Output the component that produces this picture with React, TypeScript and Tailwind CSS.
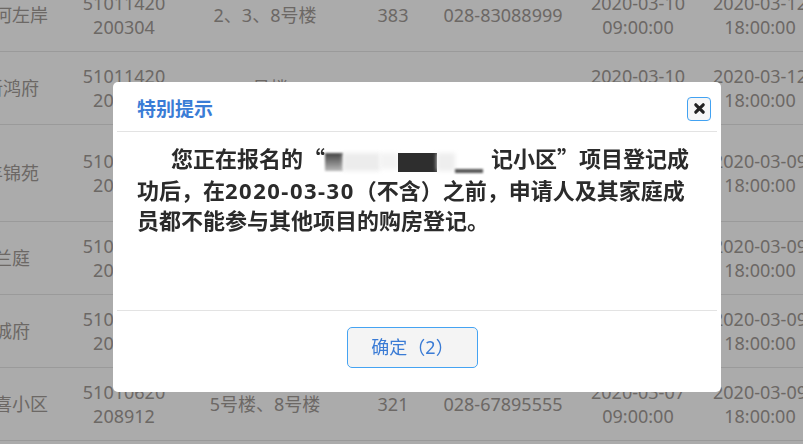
import React from 'react'

type Row = {
  name: string
  code: string[]
  bld: string[]
  num: string
  tel: string
  start: string[]
  end: string[]
  tall?: boolean
}

const rows: Row[] = [
  { name: '蓝光河左岸', code: ['51011420', '200304'], bld: ['2、3、8号楼'], num: '383', tel: '028-83088999', start: ['2020-03-10', '09:00:00'], end: ['2020-03-12', '18:00:00'] },
  { name: '锦新鸿府', code: ['51011420', '200298'], bld: ['7号楼'], num: '216', tel: '028-85126666', start: ['2020-03-10', '09:00:00'], end: ['2020-03-12', '18:00:00'] },
  { name: '华丰锦苑', code: ['51010720', '200276'], bld: ['1、2、3、4号楼', '5、6、7号楼', '9号楼'], num: '504', tel: '028-61538888', start: ['2020-03-07', '09:00:00'], end: ['2020-03-09', '18:00:00'], tall: true },
  { name: '御兰庭', code: ['51010420', '200311'], bld: ['3号楼'], num: '156', tel: '028-87654321', start: ['2020-03-07', '09:00:00'], end: ['2020-03-09', '18:00:00'] },
  { name: '铭城府', code: ['51012220', '200287'], bld: ['1、2号楼'], num: '242', tel: '028-65432100', start: ['2020-03-07', '09:00:00'], end: ['2020-03-09', '18:00:00'] },
  { name: '新双喜小区', code: ['51010620', '208912'], bld: ['5号楼、8号楼'], num: '321', tel: '028-67895555', start: ['2020-03-07', '09:00:00'], end: ['2020-03-09', '18:00:00'] },
  { name: '锦城华府', code: ['51010820', '200265'], bld: ['2号楼'], num: '188', tel: '028-84561234', start: ['2020-03-06', '09:00:00'], end: ['2020-03-08', '18:00:00'] },
]

function Cell({ lines }: { lines: string[] }) {
  return (
    <div className="flex flex-col items-center justify-center text-center whitespace-nowrap">
      {lines.map((l, i) => (
        <span key={i}>{l}</span>
      ))}
    </div>
  )
}

function CloseIcon() {
  return (
    <svg width="13" height="13" viewBox="0 0 14 14">
      <path d="M3 3 L11 11 M11 3 L3 11" stroke="#222" strokeWidth="3.4" strokeLinecap="round" />
    </svg>
  )
}

// full-width quotes need the CJK face
const cjk = { fontFamily: '"Noto Sans CJK SC", sans-serif' }

export default function App() {
  return (
    <div
      className="relative w-[803px] h-[444px] overflow-hidden bg-white"
      style={{ fontFamily: '"Noto Sans", "Noto Sans CJK SC", sans-serif' }}
    >
      {/* project list (behind the dialog) */}
      <div className="-ml-[67px] -mt-[21px] text-[18px] leading-[24px] text-[#a29c97]">
        {rows.map((r, i) => (
          <div
            key={i}
            className={`grid grid-cols-[140px_102px_180px_76px_144px_126px_118px] border-b border-[#e6e6e6] ${
              r.tall ? 'h-[97px]' : 'h-[73px]'
            }`}
          >
            <Cell lines={[r.name]} />
            <Cell lines={r.code} />
            <Cell lines={r.bld} />
            <Cell lines={[r.num]} />
            <Cell lines={[r.tel]} />
            <Cell lines={r.start} />
            <Cell lines={r.end} />
          </div>
        ))}
      </div>

      {/* mask + dialog */}
      <div className="fixed inset-0 bg-black/[0.33]">
        <div className="ml-[113px] mt-[82px] w-[608px] h-[310px] bg-white rounded-[5px] flex flex-col">
          {/* Header */}
          <div className="mx-1 h-[50px] pt-[6px] pl-5 pr-[6px] flex items-center justify-between border-b border-[#e3e3e3]">
            <h3 className="text-[19px] font-bold text-[#3a7cd6]">特别提示</h3>
            <button className="w-6 h-6 -mt-[2px] flex items-center justify-center rounded-[4px] border border-[#42a2f2] bg-[#f6f6f6]">
              <CloseIcon />
            </button>
          </div>

          {/* Body */}
          <div className="flex-1 pl-6 pr-[30px] pt-[10px]">
            <p className="indent-[34px] text-[22px] leading-[30px] font-bold text-[#2b2b2b]">
              您正在报名的<span style={cjk}>“</span>
              <span className="inline-flex items-start w-[166px] h-[22px] align-[-4px]">
                <span className="w-[18px] h-[18px] bg-gradient-to-b from-[#444] to-[#bbb] blur-[1px]" />
                <span className="w-[37px] h-[18px] bg-[#ececec] blur-[2px]" />
                <span className="w-[18px] h-[16px] bg-[#f3f3f3] blur-[2px]" />
                <span className="w-[39px] h-[19px] bg-[#2e2e2e] blur-[0.5px]" />
                <span className="w-[18px] h-[18px] bg-[#eeeeee] blur-[2px]" />
                <span className="w-[28px] h-[4px] mt-[16px] bg-[#555] blur-[1px]" />
              </span>
              记小区<span style={cjk}>”</span>项目登记成功后，在<span className="tracking-[1.5px]">2020-03-30</span>（不含）之前，申请人及其家庭成员都不能参与其他项目的购房登记。
            </p>
          </div>

          {/* Footer */}
          <div className="mx-1 border-t border-[#e3e3e3] pt-4 pb-6 pr-[9px] flex justify-center">
            <button className="w-[131px] h-[41px] rounded-[5px] border border-[#45a3f2] bg-[#f4f4f4] text-[18px] text-[#3a7bd5]">
              确定（2）
            </button>
          </div>
        </div>
      </div>
    </div>
  )
}
